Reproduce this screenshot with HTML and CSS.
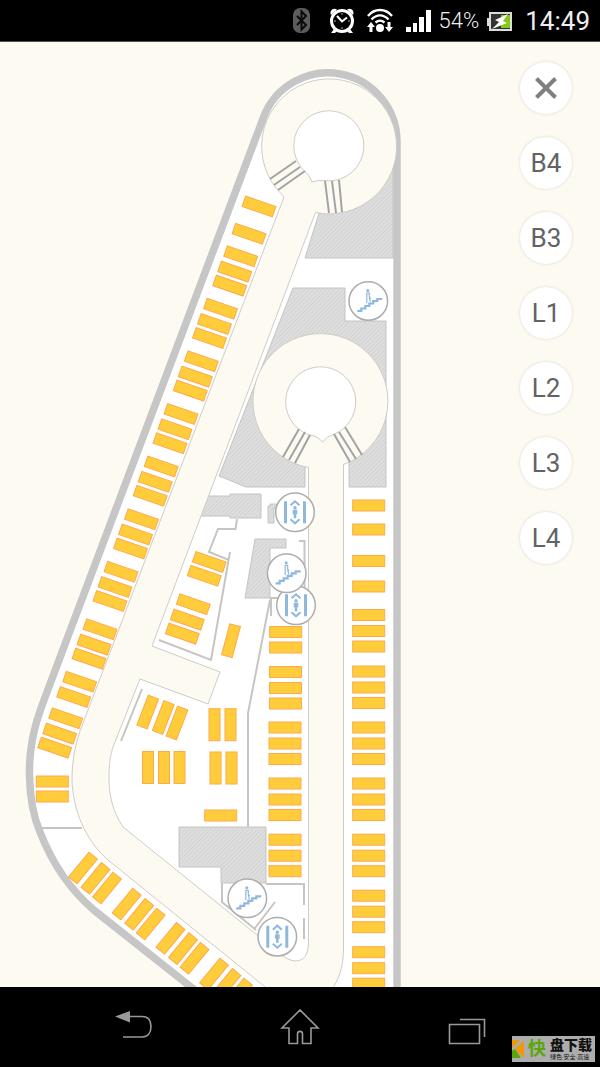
FILE: index.html
```html
<!DOCTYPE html>
<html lang="en">
  <head>
    <meta charset="UTF-8" />
    <meta name="viewport" content="width=device-width, initial-scale=1.0" />
    <title>Parking Map</title>
    <link rel="stylesheet" href="styles.css">
  </head>
  <body>
    <header class="status-bar">
      <svg class="status-icon" width="30" height="28" viewBox="0 0 30 28">
        <rect x="4" y="1" width="17" height="25" rx="7" fill="#5c5c5c" />
        <path d="M8 9l9 9-4.500 4.500V4.500L17 9l-9 9" fill="none" stroke="#0a0a0a" stroke-width="2" />
      </svg>
      <svg class="status-icon" width="30" height="28" viewBox="0 0 30 28">
        <path d="M4 8C2 4 6 0 10 2.500zM26 8c2-4-2-8-6-5.500zM7 22l-3 4h4l2-2zM23 22l3 4h-4l-2-2z" fill="#fff" />
        <circle cx="15" cy="14" r="10.500" fill="#000" stroke="#fff" stroke-width="3" />
        <path d="M10 9l5 5.500 5-4" fill="none" stroke="#fff" stroke-width="2" />
        <path d="M15 6v2M15 20v2M7 14h2M21 14h2" stroke="#aaa" stroke-width="1" />
      </svg>
      <svg class="status-icon" width="30" height="28" viewBox="0 0 30 28">
        <g fill="none" stroke="#fff" stroke-width="2.400">
          <path d="M3 9C9.500 1 20.500 1 27 9" />
          <path d="M6.500 12.500c5-5.500 12-5.500 17 0" />
          <path d="M10.500 15.500c3-2.500 6-2.500 9 0" />
        </g>
        <circle cx="15" cy="21" r="4" fill="#fff" />
        <path d="M6 15l4 5H7.500v5h-3v-5H2zM24 25l4-5h-2.500v-5h-3v5H20z" fill="#fff" />
      </svg>
      <svg class="status-icon" width="28" height="28" viewBox="0 0 28 28">
        <path d="M3 20h5v5H3zM10 16h4v9h-4zM16 10h5v15h-5zM23 3h5v22h-5z" fill="#fff" />
      </svg>
      <span class="battery-level">54%</span>
      <svg class="status-icon" width="30" height="28" viewBox="0 0 30 28">
        <path d="M0 11h2v8H0z" fill="#ddd" />
        <rect x="3" y="6" width="21" height="17" fill="#333" stroke="#ddd" stroke-width="2" />
        <path d="M14 8h9v13h-9z" fill="#85c81c" />
        <path d="M21 7L8 13l4 2-7 7 15-6-4-2z" fill="#fff" />
      </svg>
      <span class="clock">14:49</span>
    </header>

    <main class="map">
      <svg class="map-canvas" viewBox="0 42 600 945" role="img" aria-label="Parking floor plan">
        <defs>
          <pattern id="hatch" width="3" height="3" patternUnits="userSpaceOnUse" patternTransform="rotate(45)">
            <rect width="3" height="3" fill="#dedede" />
            <rect width="1" height="3" fill="#d3d3d3" />
          </pattern>
          <rect id="spot" x="-16" y="-5.500" width="32" height="11" />
          <g id="tilted-two">
            <use href="#spot" transform="rotate(19)" />
            <use href="#spot" transform="translate(-6 15.300) rotate(19)" />
          </g>
          <g id="tilted-three">
            <use href="#tilted-two" />
            <use href="#spot" transform="translate(-11 29.300) rotate(19)" />
          </g>
          <g id="flat-three">
            <use href="#spot" />
            <use href="#spot" y="16" />
            <use href="#spot" y="31.500" />
          </g>
          <g id="ramp-three">
            <use href="#spot" transform="rotate(-50.500)" />
            <use href="#spot" transform="translate(12.500 10.300) rotate(-50.500)" />
            <use href="#spot" transform="translate(24 20) rotate(-50.500)" />
          </g>
          <g id="stairs">
            <circle class="marker" r="19.300" />
            <path d="M-11 10h4V7.500h4V5h4V2.500h4V0h4v-2h5" fill="none" stroke="#8fb8dc" stroke-width="2.200" />
            <circle cx="-0.500" cy="-10.500" r="1.500" fill="#8fb8dc" />
            <path d="M-2-8h3v4l1.500 1.500M-1.500-8v5l0 5M1-4l1 5" fill="none" stroke="#8fb8dc" stroke-width="1.200" />
          </g>
          <g id="lift">
            <circle class="marker" r="19.300" />
            <path d="M-9.500-11v22M9.500-11v22" stroke="#8fb8dc" stroke-width="3" />
            <path d="M-4.500-7L0-11l4.500 4M-4.500 7L0 11l4.500-4" fill="none" stroke="#8fb8dc" stroke-width="2" />
            <circle cy="-4.500" r="1.700" fill="#8fb8dc" />
            <path d="M-2.300-2.500h4.600v4.500H1.300v4h-2.600V2h-1z" fill="#8fb8dc" />
          </g>
        </defs>

        <!-- building -->
        <path class="building" d="M397 1010V142A69 69 0 0 0 263.400 117.600L44 700C33 729 29 750 29.500 776C30 800 34 818 40 832C52 863 69 889 95 911L220 1010Z" />

        <!-- closed areas -->
        <g class="closed">
          <path d="M305 258L320 210L393 160V258Z" />
          <path d="M293 288H345V321H386V487H349V440H305V487H246L219 476Z" />
          <path d="M208 496H230V494H261V518H230V516H201Z" />
          <path d="M268 506H270V504H278V508H274V523H268Z" />
          <path d="M255 539H286V548H270V598H245Z" />
          <path d="M179 827H266V883H221V867H179Z" />
        </g>

        <!-- driveway with both roundabouts -->
        <path class="road" d="M315.500 212.500A67.500 67.500 0 1 0 276 188L284 197L83 723C75 744 72 760 72 780C73 810 85 840 108 860L275 995H329C338 980 343.500 970 343.500 948V464.500A67.500 67.500 0 1 0 308.500 467.500V943C308 955 304 961 295 961C287 960 280 955 272 947L123 827C113 812 109 795 109 780C109 765 110 756 113 747L140 679L208 704L220 672L152 646Z" />
        <path class="island" d="M304 170.500A35 35 0 1 1 324 180.500Q317 180 312 182Q310 175 304 170.500Z" />
        <path class="island" d="M309.500 435A35 35 0 1 1 334.500 434Q327 436 322.500 442Q318 436 309.500 435Z" />

        <path class="gates" d="M270 179L296 161M274 185L300 167M278 190L305 171M325 181L329 213M332 181L336 213M339 180L342 212M299 429L283 457M305 432L289 460M310 435L295 463M334 434L350 462M339 432L356 459M345 427L362 455" />

        <!-- inner walls -->
        <path class="walls" d="M237 519L235.500 529H218L209 552L229 560M230 552L211 660L159 640M142 689L121 741M41 828H82M299 541H304.500V590M270 598H280M271 598V616M270 600L248 713V827M266 884H304V905M304 918V939M222 883V902L256 930M275 902L255 928" />

        <!-- parking spots -->
        <g class="spots">
          <use href="#spot" transform="translate(259 206.500) rotate(19)" />
          <use href="#spot" transform="translate(249 233.700) rotate(19)" />
          <use href="#tilted-three" x="240.700" y="256.300" />
          <use href="#tilted-three" x="220.500" y="308.700" />
          <use href="#tilted-three" x="201.300" y="361.300" />
          <use href="#tilted-three" x="181" y="414" />
          <use href="#tilted-three" x="161.200" y="466.500" />
          <use href="#tilted-three" x="141.500" y="519.200" />
          <use href="#tilted-three" x="121" y="571.700" />
          <use href="#tilted-three" x="100" y="629.300" />
          <use href="#tilted-two" x="79.700" y="681.700" />
          <use href="#tilted-three" x="65.700" y="718.300" />
          <use href="#spot" x="52.300" y="781.500" />
          <use href="#spot" x="52.300" y="796.500" />

          <use href="#ramp-three" x="83" y="868" />
          <use href="#ramp-three" x="126.700" y="904" />
          <use href="#ramp-three" x="170.500" y="938.300" />
          <use href="#ramp-three" x="214" y="974" />

          <use href="#spot" transform="translate(209.300 562) rotate(19)" />
          <use href="#spot" transform="translate(204.300 575.700) rotate(19)" />
          <use href="#tilted-three" x="193.300" y="604.300" />
          <use href="#spot" transform="translate(231 640.700) rotate(-75)" />
          <use href="#spot" transform="translate(147.700 712) rotate(-69)" />
          <use href="#spot" transform="translate(163.300 717.500) rotate(-69)" />
          <use href="#spot" transform="translate(177 723) rotate(-69)" />
          <use href="#spot" transform="translate(148 767.500) rotate(90)" />
          <use href="#spot" transform="translate(164 767.500) rotate(90)" />
          <use href="#spot" transform="translate(179.500 767.500) rotate(90)" />
          <use href="#spot" transform="translate(214.500 724.700) rotate(90)" />
          <use href="#spot" transform="translate(230.500 724.700) rotate(90)" />
          <use href="#spot" transform="translate(215.500 768) rotate(90)" />
          <use href="#spot" transform="translate(231.500 768) rotate(90)" />
          <use href="#spot" x="220.700" y="815.500" />

          <use href="#spot" x="285.700" y="632" />
          <use href="#spot" x="285.700" y="647.500" />
          <use href="#flat-three" x="285.500" y="672" />
          <use href="#flat-three" x="285" y="727.500" />
          <use href="#flat-three" x="285" y="783.500" />
          <use href="#flat-three" x="285" y="839.700" />

          <use href="#spot" x="368.700" y="505.500" />
          <use href="#spot" x="368.700" y="529.500" />
          <use href="#spot" x="368.700" y="561" />
          <use href="#spot" x="368.700" y="586.500" />
          <use href="#flat-three" x="368.700" y="615" />
          <use href="#flat-three" x="368.700" y="671.500" />
          <use href="#flat-three" x="368.700" y="727.500" />
          <use href="#flat-three" x="368.700" y="783.500" />
          <use href="#flat-three" x="368.700" y="839.700" />
          <use href="#flat-three" x="368.700" y="895.700" />
          <use href="#flat-three" x="368.700" y="952.200" />
        </g>

        <!-- stairs and lifts -->
        <use href="#stairs" x="368.300" y="301" />
        <use href="#lift" x="295" y="512.300" />
        <use href="#lift" x="296" y="605.300" />
        <use href="#stairs" x="286.700" y="573.300" />
        <use href="#stairs" x="247.300" y="898.300" />
        <use href="#lift" x="277.300" y="936.700" />
      </svg>

      <div class="floors">
        <button class="floor-btn" type="button" aria-label="Close">
          <svg width="24" height="24" viewBox="0 0 24 24">
            <path d="M2.500 2.500l19 19M21.500 2.500l-19 19" stroke="#808080" stroke-width="4" />
          </svg>
        </button>
        <button class="floor-btn" type="button">B4</button>
        <button class="floor-btn" type="button">B3</button>
        <button class="floor-btn" type="button">L1</button>
        <button class="floor-btn" type="button">L2</button>
        <button class="floor-btn" type="button">L3</button>
        <button class="floor-btn" type="button">L4</button>
      </div>
    </main>

    <nav class="nav-bar">
      <button class="nav-btn" type="button" aria-label="Back">
        <svg width="40" height="40" viewBox="0 0 40 40">
          <path d="M2 9.500L17 4v11.500z" fill="#999" />
          <path d="M16 9.500h13c6 0 9 4 9 10s-3 10.500-9 10.500H10" fill="none" stroke="#999" stroke-width="1.600" />
        </svg>
      </button>
      <button class="nav-btn" type="button" aria-label="Home">
        <svg width="40" height="40" viewBox="0 0 40 40">
          <path d="M20 3L2 21h7v15.500h8.500V27c0-3.500 5-3.500 5 0v9.500H31V21h7z" fill="none" stroke="#999" stroke-width="1.600" />
        </svg>
      </button>
      <button class="nav-btn" type="button" aria-label="Recent apps">
        <svg width="40" height="40" viewBox="0 0 40 40">
          <path d="M2.500 17.500h30v19h-30zM13 12.500h24.500V30" fill="none" stroke="#999" stroke-width="1.600" />
        </svg>
      </button>
      <div class="watermark">
        <svg class="watermark-logo" width="12" height="18" viewBox="0 0 12 18">
          <path d="M0 0h8L0 8zM12 1v17L3 9z" fill="#f39800" />
          <path d="M0 10.500L3 9l6 9H0z" fill="#5ba60a" />
        </svg>
        <span class="watermark-mark">快</span>
        <div class="watermark-text">
          <span class="watermark-name">盘下载</span>
          <span class="watermark-tag">绿色·安全·高速</span>
        </div>
      </div>
    </nav>
  </body>
</html>
```
FILE: styles.css
```css
* {
  box-sizing: border-box;
}

body {
  margin: 0;
  min-height: 100vh;
  display: flex;
  flex-direction: column;
  background-color: #000;
  font-family: Roboto, "Noto Sans CJK SC", sans-serif;
}

button {
  padding: 0;
  border: none;
  background: none;
  font-family: inherit;
  cursor: pointer;
}

svg {
  display: block;
}

.status-bar {
  display: flex;
  align-items: center;
  justify-content: flex-end;
  gap: 8px;
  height: 42px;
  padding: 0 10px;
  background-color: #000;
  border-bottom: 1px solid #55534f;
  color: #eee;
}

.status-icon {
  flex-shrink: 0;
}

.battery-level {
  font-size: 22px;
  font-weight: 300;
}

.clock {
  font-size: 26px;
}

.map {
  position: relative;
  flex: 1;
  background-color: #fdfaf2;
}

.map-canvas {
  width: 100%;
  height: auto;
}

.building {
  fill: #fff;
  stroke: #c6c6c6;
  stroke-width: 7.5;
}

.closed path {
  fill: url(#hatch);
  stroke: #c4c4c0;
  stroke-width: 1;
}

.road {
  fill: #fdfaf2;
  stroke: #cdccc6;
  stroke-width: 1;
}

.island {
  fill: #fff;
  stroke: #cdccc6;
  stroke-width: 1;
}

.gates {
  stroke: #a3a3a3;
  stroke-width: 2;
}

.walls {
  fill: none;
  stroke: #c6c5c1;
  stroke-width: 2;
}

.spots {
  fill: #ffcd3c;
  stroke: #ffa94a;
  stroke-width: 1;
}

.marker {
  fill: #fff;
  stroke: #adadad;
  stroke-width: 1.5;
}

.floors {
  position: absolute;
  top: 20px;
  right: 28px;
  display: flex;
  flex-direction: column;
  gap: 23px;
}

.floor-btn {
  display: flex;
  align-items: center;
  justify-content: center;
  width: 52px;
  height: 52px;
  border-radius: 50%;
  background-color: #fff;
  box-shadow: 0 0 3px rgba(0, 0, 0, 0.15);
  color: #636363;
  font-size: 26px;
}

.nav-bar {
  position: relative;
  display: flex;
  align-items: center;
  height: 80px;
  padding: 0 50px;
  background-color: #000;
}

.nav-btn {
  flex: 1;
  display: flex;
  justify-content: center;
}

.watermark {
  position: absolute;
  right: 5px;
  bottom: 5px;
  display: flex;
  align-items: center;
  gap: 4px;
  width: 83px;
  height: 26px;
  background-color: #adadad;
  white-space: nowrap;
}

.watermark-logo {
  flex-shrink: 0;
}

.watermark-mark {
  color: #5ba60a;
  font-size: 18px;
  font-weight: bold;
  line-height: 26px;
}

.watermark-text {
  display: flex;
  flex-direction: column;
  color: #111;
}

.watermark-name {
  font-size: 14px;
  font-weight: 900;
  line-height: 15px;
}

.watermark-tag {
  font-size: 6px;
  line-height: 8px;
}
```
